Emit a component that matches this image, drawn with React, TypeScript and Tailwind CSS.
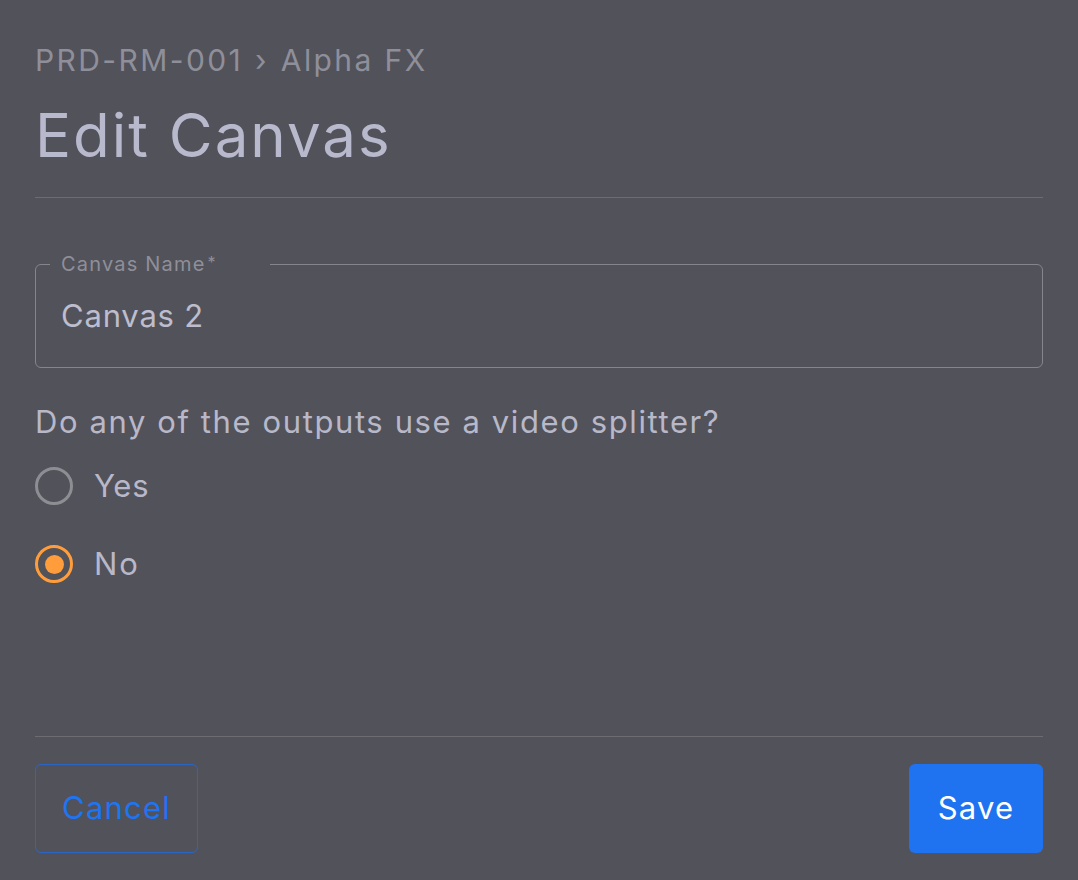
import React from "react";

const font = { fontFamily: "Inter, 'Noto Sans', sans-serif" };

function Radio({ label, checked, tracking }: { label: string; checked?: boolean; tracking: string }) {
  return (
    <label className="flex items-center h-[48px] cursor-pointer">
      <span
        className={`flex items-center justify-center w-[38px] h-[38px] rounded-full border-[3.5px] ${
          checked ? "border-[#ff9d3c]" : "border-[#8d8d94]"
        }`}
      >
        {checked && <span className="block w-[19px] h-[19px] rounded-full bg-[#ff9d3c]" />}
      </span>
      <span className={`ml-[21px] text-[31px] leading-[40px] text-[#b8b8c9] ${tracking}`}>{label}</span>
    </label>
  );
}

export default function App() {
  return (
    <div className="min-h-screen h-[880px] bg-[#52525a] px-[35px] flex flex-col" style={font}>
      {/* Header */}
      <div className="pt-[40px] text-[30px] leading-[40px] text-[#8f8f9a] tracking-[2.4px]">
        PRD-RM-001 <span className="mx-[1px]">›</span> Alpha FX
      </div>
      <h1 className="mt-[19px] text-[60px] leading-[72px] text-[#b9b9cd] font-normal tracking-[2px]">Edit Canvas</h1>
      <div className="mt-[26px] h-px bg-[#6c6c72]" />

      {/* Canvas name field */}
      <div className="relative mt-[66px] h-[104px] rounded-[6px] border border-[#85858c] flex items-center px-[25px]">
        <div className="absolute -top-[13px] left-[14px] w-[220px] h-[24px] bg-[#52525a] pl-[11px] text-[20px] leading-[24px] text-[#8f8f99] tracking-[1.2px]">
          Canvas Name<span className="relative -top-[3px] ml-[2px] text-[16px]">*</span>
        </div>
        <span className="text-[31px] text-[#bdbdcd] tracking-[0.8px]">Canvas 2</span>
      </div>

      {/* Question */}
      <div className="mt-[34px] text-[31px] leading-[40px] text-[#b8b8c9] tracking-[1.6px]">
        Do any of the outputs use a video splitter?
      </div>
      <div className="mt-[20px] flex flex-col gap-[30px]">
        <Radio label="Yes" tracking="tracking-[0.7px]" />
        <Radio label="No" checked tracking="tracking-[2px]" />
      </div>

      <div className="flex-1" />

      {/* Footer */}
      <div className="h-px bg-[#6c6c72]" />
      <div className="mt-[27px] mb-[27px] flex justify-between">
        <button className="w-[163px] h-[89px] rounded-[6px] border border-[#2b66c6] text-[31px] text-[#1f74f2] tracking-[1.2px]">
          Cancel
        </button>
        <button className="w-[134px] h-[89px] rounded-[6px] bg-[#1f72f0] text-[31px] text-white tracking-[1.2px]">
          Save
        </button>
      </div>
    </div>
  );
}
